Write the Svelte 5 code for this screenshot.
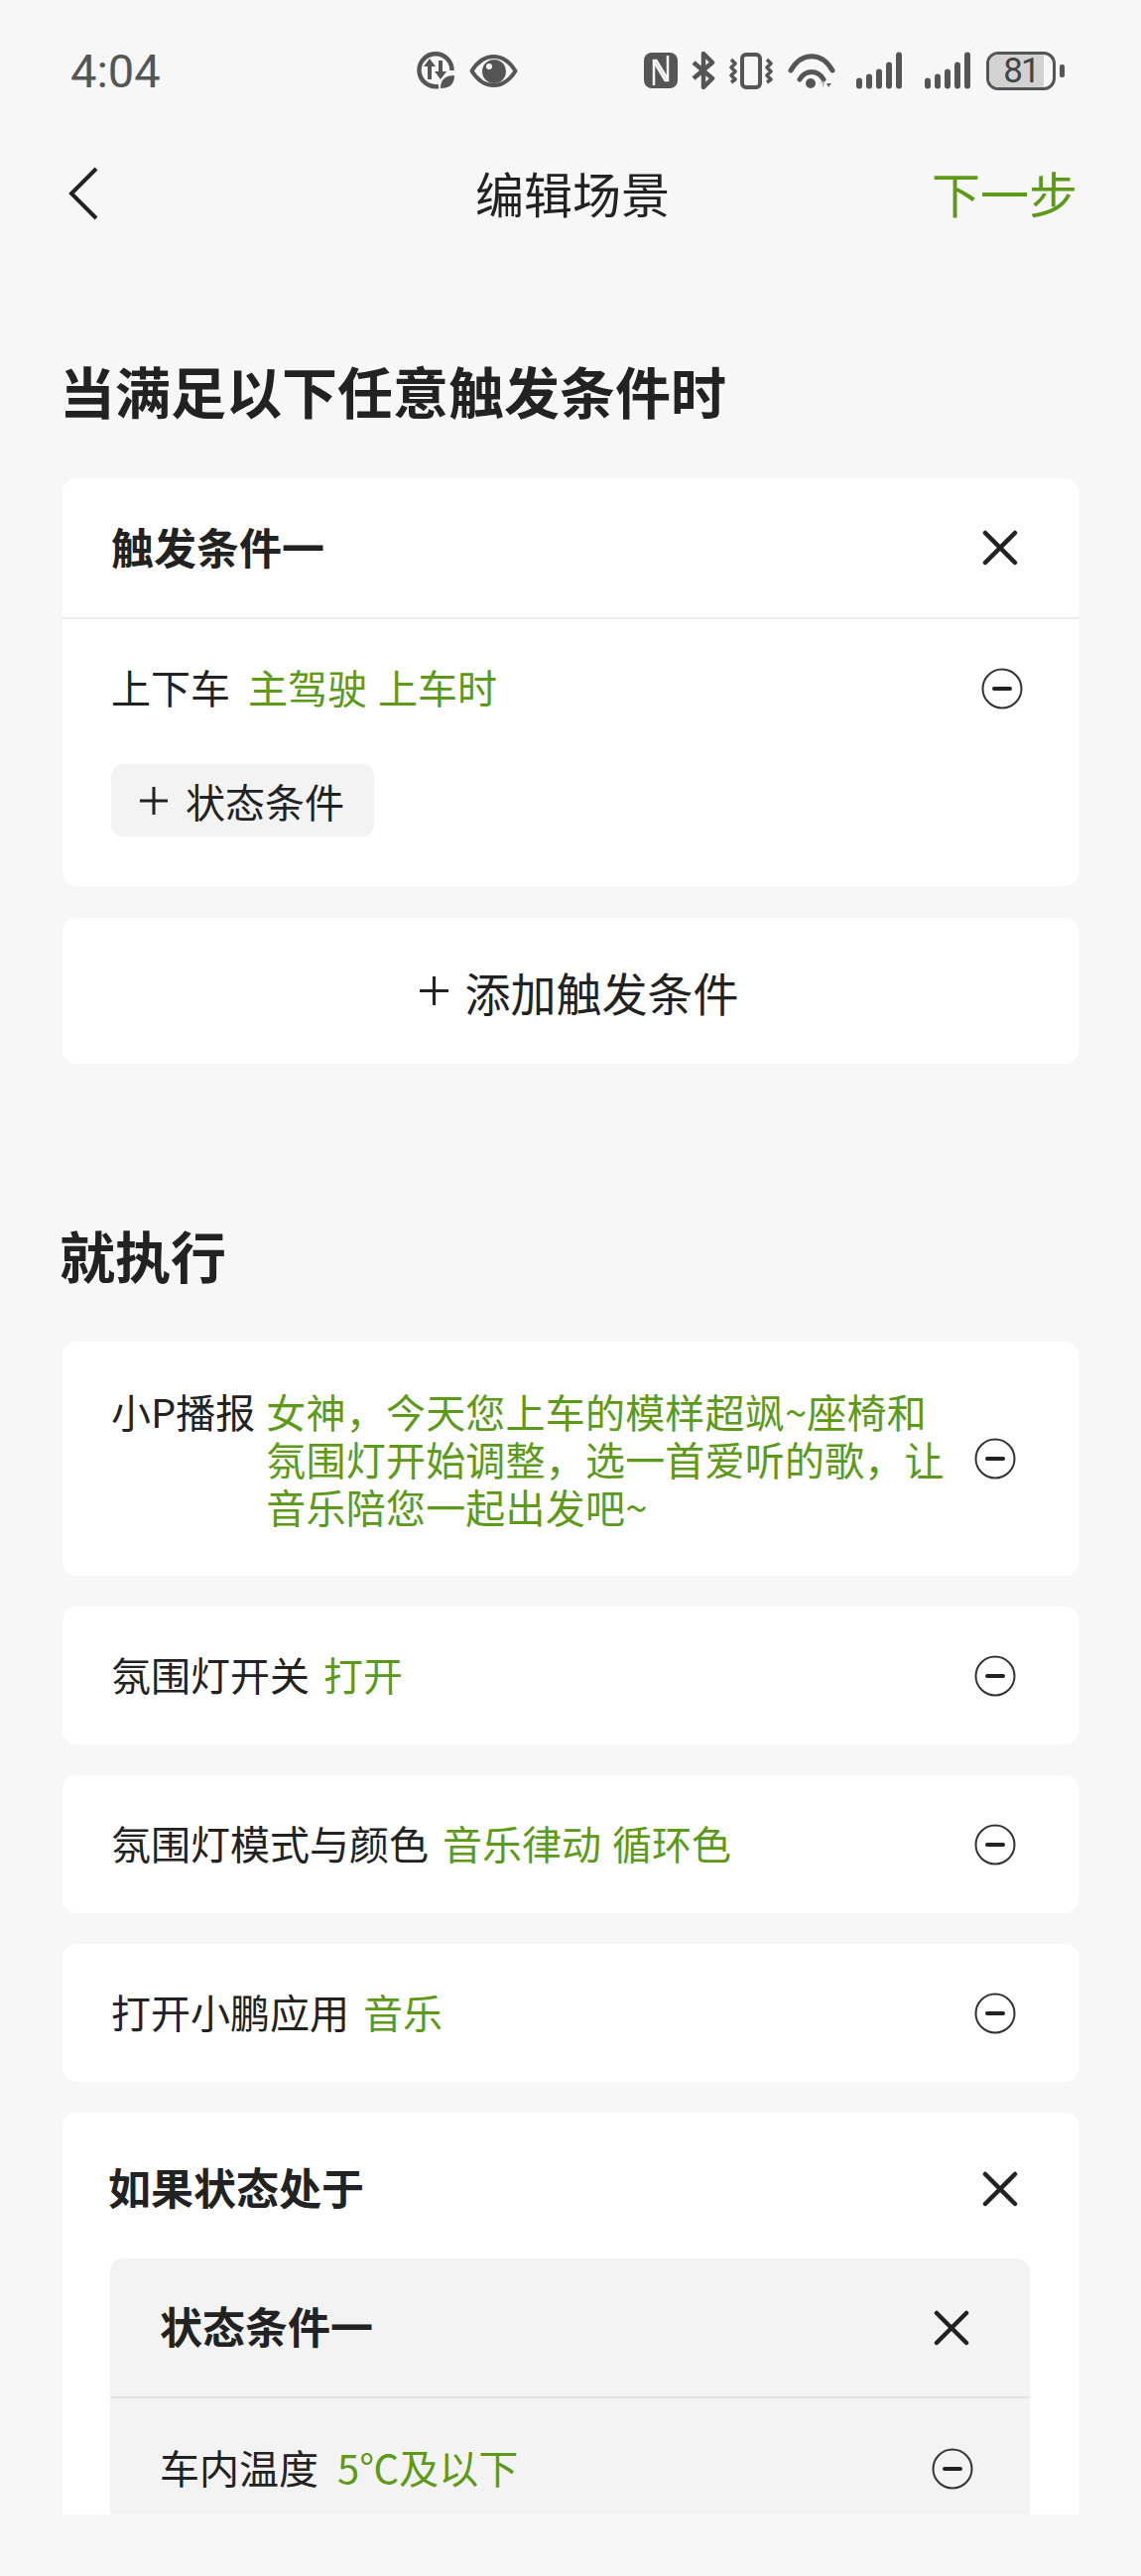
<script>
  const execRows = [
    { label: '氛围灯开关', value: '打开' },
    { label: '氛围灯模式与颜色', value: '音乐律动 循环色' },
    { label: '打开小鹏应用', value: '音乐' }
  ];
  const bars = [
    { x: 0, h: 11 },
    { x: 10, h: 15 },
    { x: 20, h: 20 },
    { x: 30, h: 27 },
    { x: 40, h: 37 }
  ];
</script>

{#snippet minus()}
  <svg class="minus" width="42" height="42" viewBox="0 0 42 42">
    <circle cx="21" cy="21" r="19.5" fill="none" stroke="#333" stroke-width="2" />
    <path d="M13 21h16" stroke="#222" stroke-width="4" stroke-linecap="round" />
  </svg>
{/snippet}

{#snippet close()}
  <svg class="close" width="36" height="36" viewBox="0 0 36 36">
    <path d="M3 3l30 30M33 3L3 33" fill="none" stroke="#222" stroke-width="4.500" stroke-linecap="round" />
  </svg>
{/snippet}

{#snippet plus(size)}
  <svg class="plus" width={size} height={size} viewBox="0 0 30 30">
    <path d="M15 1v28M1 15h28" fill="none" stroke="#222" stroke-width="3" />
  </svg>
{/snippet}

{#snippet signal()}
  <svg class="sig" width="46" height="38" viewBox="0 0 46 38">
    {#each bars as b}
      <rect x={b.x} y={37.5 - b.h} width="6" height={b.h} rx="3" fill="#555" />
    {/each}
  </svg>
{/snippet}

<main class="page">
  <div class="status">
    <span class="time">4:04</span>
    <div class="status-mid">
      <svg width="38" height="38" viewBox="0 0 38 38">
        <path d="M22 35A16.500 16.500 0 1 1 35.500 19" fill="none" stroke="#555" stroke-width="4.500" />
        <path d="M13 28V12M24 9v13" fill="none" stroke="#555" stroke-width="4" />
        <path d="M7 15l6-8 6 8zM18 20l6 8 6-8z" fill="#555" />
        <path d="M24 37c0-9 5-13 14-13 0 9-5 13-14 13z" fill="#555" />
      </svg>
      <svg width="49" height="33" viewBox="0 0 49 33">
        <path d="M2.500 16.500C9 6 16 2 24.500 2s15.500 4 22 14.500c-6.500 10.500-13.500 14.500-22 14.500S9 27 2.500 16.500z" fill="none" stroke="#555" stroke-width="4" stroke-linejoin="round" />
        <circle cx="25" cy="17" r="12" fill="#555" />
        <circle cx="20" cy="12" r="3" fill="#f7f7f7" />
      </svg>
    </div>
    <div class="status-right">
      <svg width="34" height="36" viewBox="0 0 34 36">
        <rect width="34" height="36" rx="8" fill="#555" />
        <path d="M10 33V8h2.500L24 27" fill="none" stroke="#f7f7f7" stroke-width="2.500" />
        <path d="M24 3v25h-2.500L10 9" fill="none" stroke="#f7f7f7" stroke-width="2.500" />
      </svg>
      <svg width="24" height="38" viewBox="0 0 24 38">
        <path d="M2 11l19 16-9 9V2l9 9L2 27" fill="none" stroke="#555" stroke-width="4.500" stroke-linejoin="round" />
      </svg>
      <svg width="44" height="37" viewBox="0 0 44 37">
        <rect x="13" y="2" width="18" height="33" rx="4" fill="none" stroke="#555" stroke-width="4" />
        <path d="M2 7l4 4-4 4 4 4-4 4 4 4-4 3M38 7l4 4-4 4 4 4-4 4 4 4-4 3" fill="none" stroke="#555" stroke-width="3.500" stroke-linejoin="round" />
      </svg>
      <svg class="wifi" width="48" height="36" viewBox="0 0 48 36">
        <path d="M3 18C14 -1 34 -1 45 18M12 27C18 17 30 17 36 27" fill="none" stroke="#555" stroke-width="5" stroke-linecap="round" />
        <circle cx="23" cy="31" r="5" fill="#555" />
        <path d="M35 35v-5l-3 1.500 3-3.500 2 3.500z" fill="#aaa" />
        <path d="M41 28v3h3l-3 4-2-4h2z" fill="#666" />
      </svg>
      {@render signal()}
      {@render signal()}
      <div class="battery">
        <div class="battery-body"><span class="battery-level"></span><span class="battery-num">81</span></div>
        <span class="battery-nub"></span>
      </div>
    </div>
  </div>

  <nav class="nav">
    <svg class="back" width="32" height="54" viewBox="0 0 32 54">
      <path d="M29 2L4 27l25 25" fill="none" stroke="#222" stroke-width="4" />
    </svg>
    <h1>编辑场景</h1>
    <a class="next" href="#next">下一步</a>
  </nav>

  <h2 class="section first">当满足以下任意触发条件时</h2>

  <section class="card trigger">
    <div class="card-head">
      <strong>触发条件一</strong>
      {@render close()}
    </div>
    <div class="row trigger-row">
      <span class="text">上下车<em>主驾驶 上车时</em></span>
      {@render minus()}
    </div>
    <button class="state-btn">{@render plus(30)}<span>状态条件</span></button>
  </section>

  <button class="card add-btn">{@render plus(31)}<span>添加触发条件</span></button>

  <h2 class="section">就执行</h2>

  <div class="list">
    <section class="card exec-row long">
      <span class="label">小P播报</span>
      <span class="speech">女神，今天您上车的模样超飒~座椅和氛围灯开始调整，选一首爱听的歌，让音乐陪您一起出发吧~</span>
      {@render minus()}
    </section>

    {#each execRows as row}
      <section class="card exec-row">
        <span class="text">{row.label}<em>{row.value}</em></span>
        {@render minus()}
      </section>
    {/each}

    <section class="card cond">
      <div class="cond-head">
        <strong>如果状态处于</strong>
        {@render close()}
      </div>
      <div class="inner">
        <div class="inner-head">
          <strong>状态条件一</strong>
          {@render close()}
        </div>
        <div class="inner-row">
          <span class="text">车内温度<em>5℃及以下</em></span>
          {@render minus()}
        </div>
      </div>
    </section>
  </div>
</main>

<style>
  :global(body) {
    background: #f7f7f7;
  }

  .page {
    height: 2534px;
    overflow: hidden;
    background: #f7f7f7;
    color: #222;
    font-family: "Noto Sans CJK SC", "Noto Sans", sans-serif;
    font-size: 40px;
  }

  .status {
    height: 142px;
    display: flex;
    align-items: center;
    padding: 0 77px 0 71px;
    box-sizing: border-box;
  }

  .time {
    width: 349px;
    font-family: Roboto, sans-serif;
    font-size: 47px;
    color: #555;
  }

  .status-mid {
    display: flex;
    align-items: center;
    gap: 15px;
  }

  .status-right {
    display: flex;
    align-items: center;
    gap: 14px;
    margin-left: auto;
  }

  .status svg {
    display: block;
    flex: none;
  }

  .wifi {
    margin: 0 7px 0 1px;
  }

  .sig {
    margin-right: 9px;
  }

  .battery {
    display: flex;
    align-items: center;
    gap: 4px;
    margin-left: -7px;
  }

  .battery-body {
    position: relative;
    width: 70px;
    height: 39px;
    box-sizing: border-box;
    border: 3.5px solid #555;
    border-radius: 12px;
    overflow: hidden;
    display: flex;
    align-items: center;
    justify-content: center;
  }

  .battery-level {
    position: absolute;
    left: 0;
    top: 0;
    bottom: 0;
    width: 86%;
    background: #d2d2d2;
  }

  .battery-num {
    position: relative;
    font-family: Roboto, sans-serif;
    font-size: 35px;
    letter-spacing: -2px;
    line-height: 1;
    color: #444;
  }

  .battery-nub {
    width: 5px;
    height: 13px;
    border-radius: 2px;
    background: #555;
  }

  .nav {
    height: 106px;
    display: grid;
    grid-template-columns: 1fr auto 1fr;
    align-items: center;
    padding: 0 64px 0 68px;
  }

  .back {
    display: block;
  }

  h1 {
    margin: 0;
    padding-bottom: 3px;
    font-size: 49px;
    font-weight: 400;
    line-height: 60px;
  }

  .next {
    justify-self: end;
    padding-bottom: 3px;
    font-size: 49px;
    color: #5c9a18;
    text-decoration: none;
  }

  .section {
    margin: 162px 0 58px 60px;
    font-size: 56px;
    font-weight: 700;
    line-height: 60px;
  }

  .section.first {
    margin-top: 115px;
    margin-bottom: 59px;
  }

  .card {
    margin: 0 63px;
    background: #fff;
    border-radius: 14px;
  }

  strong {
    padding-bottom: 5px;
    font-size: 43px;
    font-weight: 700;
  }

  em {
    margin-left: 14px;
    font-style: normal;
    word-spacing: 2px;
    color: #5c9a18;
  }

  .text {
    padding-bottom: 4px;
    white-space: pre;
  }

  .minus,
  .close,
  .plus {
    display: block;
    flex: none;
  }

  .trigger {
    padding-bottom: 50px;
  }

  .trigger em {
    margin-left: 18px;
  }

  .card-head {
    height: 140px;
    display: flex;
    align-items: center;
    justify-content: space-between;
    padding: 0 61px 0 49px;
    border-bottom: 2px solid #ececec;
  }

  .row {
    display: flex;
    align-items: center;
    justify-content: space-between;
  }

  .trigger-row {
    height: 139px;
    padding: 0 56px 0 49px;
    margin-bottom: 7px;
  }

  .state-btn {
    display: flex;
    align-items: center;
    gap: 17px;
    width: 265px;
    height: 73px;
    margin: 0 0 0 49px;
    padding: 0 0 0 28px;
    border: 0;
    border-radius: 12px;
    background: #f3f3f3;
    color: #222;
    font: inherit;
  }

  .add-btn {
    display: flex;
    align-items: center;
    justify-content: center;
    gap: 16px;
    width: 1024px;
    height: 147px;
    margin-top: 32px;
    padding: 0 0 0 16px;
    border: 0;
    color: #222;
    font: inherit;
    font-size: 46px;
  }

  .list {
    display: flex;
    flex-direction: column;
    gap: 31px;
  }

  .exec-row {
    height: 139px;
    box-sizing: border-box;
    display: flex;
    align-items: center;
    justify-content: space-between;
    padding: 0 63px 0 49px;
  }

  .exec-row.long {
    height: 236px;
  }

  .label {
    align-self: flex-start;
    margin-top: 46px;
    flex: none;
    line-height: 48px;
  }

  .speech {
    width: 690px;
    margin-left: 11px;
    margin-right: auto;
    line-height: 48px;
    letter-spacing: 0.2px;
    color: #5c9a18;
  }

  .cond {
    padding: 0 49px 0 48px;
    height: 500px;
  }

  .cond-head {
    height: 147px;
    box-sizing: border-box;
    display: flex;
    align-items: center;
    justify-content: space-between;
    padding: 6px 12px 0 0;
    margin-left: -2px;
  }

  .inner {
    height: 400px;
    background: #f3f3f3;
    border-radius: 14px;
  }

  .inner .text em {
    margin-left: 19px;
  }

  .inner-head {
    height: 139px;
    display: flex;
    align-items: center;
    justify-content: space-between;
    padding: 0 61px 0 50px;
    border-bottom: 2px solid #e2e2e2;
  }

  .inner-row {
    height: 142px;
    display: flex;
    align-items: center;
    justify-content: space-between;
    padding: 0 57px 0 50px;
  }
</style>
